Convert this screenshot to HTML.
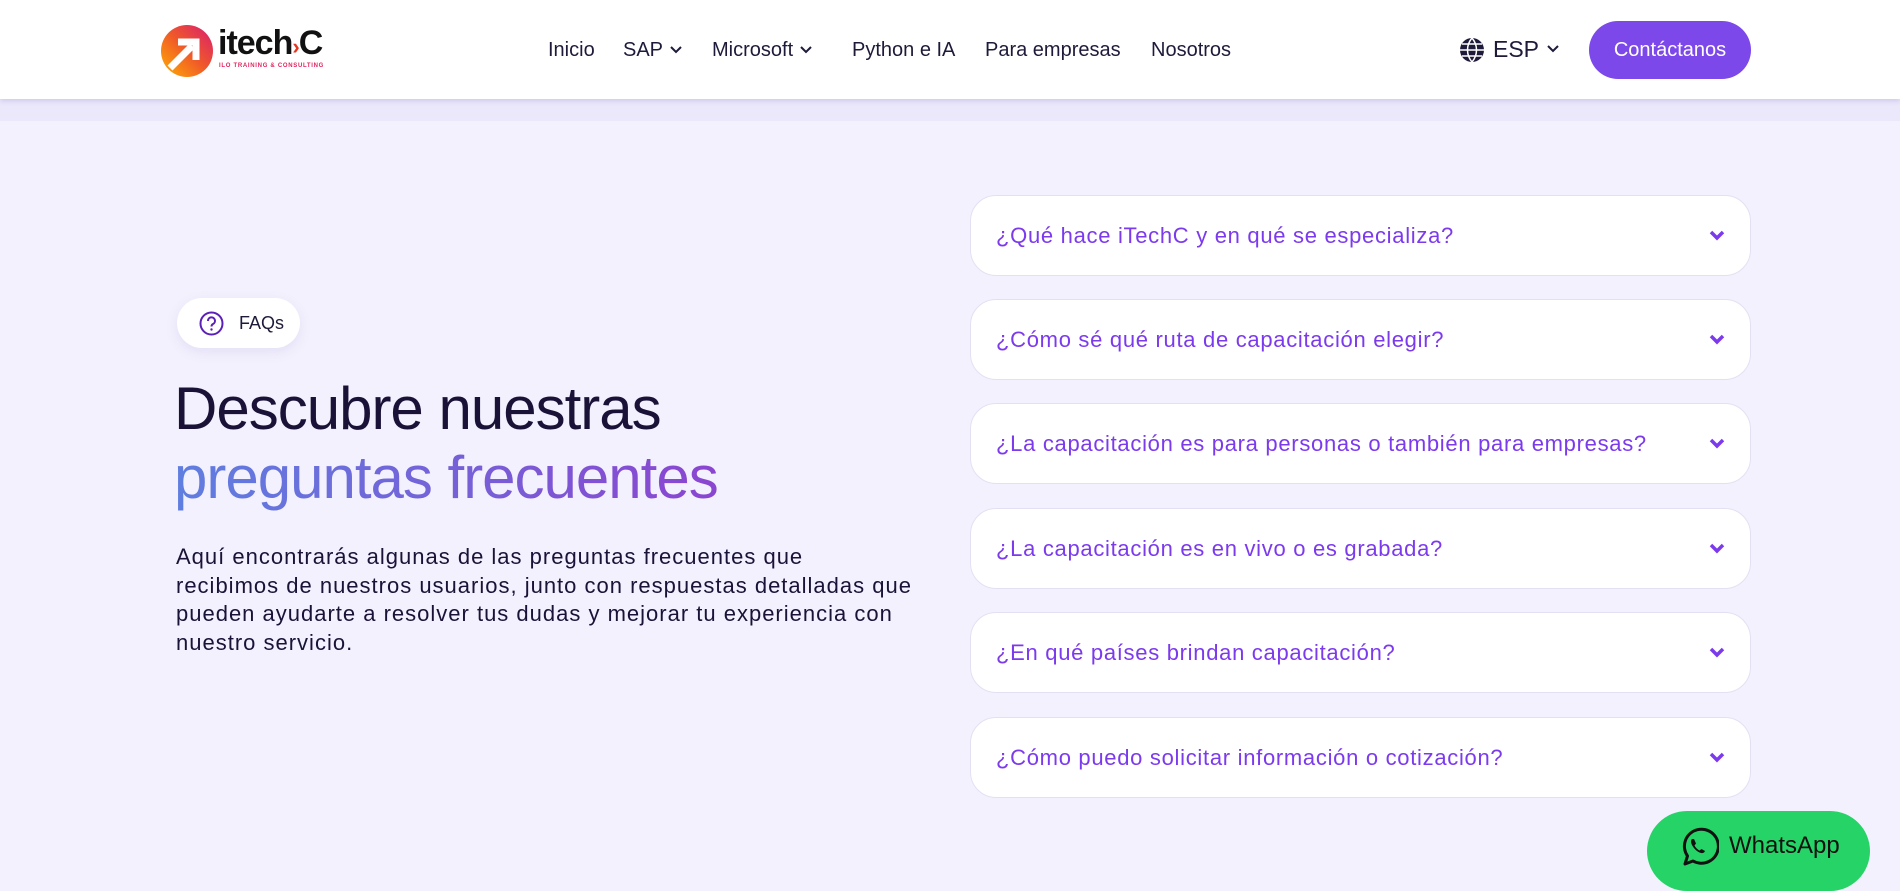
<!DOCTYPE html>
<html><head><meta charset="utf-8"><style>
*{margin:0;padding:0;box-sizing:border-box}
body{width:1900px;height:870px;overflow:hidden;background:#f3f1fd;font-family:"Liberation Sans",sans-serif;position:relative}
.hdr{position:absolute;left:0;top:0;width:1900px;height:99px;background:#fff;box-shadow:0 2px 5px rgba(80,60,160,.18);z-index:2}
.band{position:absolute;left:0;top:99px;width:1900px;height:22px;background:#ebe8fb}
.nav{position:absolute;top:39px;font-size:20px;color:#1e1b3a}
.nav span{position:absolute;white-space:nowrap}
.nav svg{margin-left:6px;vertical-align:2px}
.btn{position:absolute;left:1589px;top:21px;width:162px;height:58px;border-radius:29px;background:#7c48ea;color:#fff;font-size:20px;text-align:center;line-height:58px}
.faq{position:absolute;left:970px;width:781px;height:81px;background:#fff;border:1px solid #e4e0f3;border-radius:26px;color:#7c3aed;font-size:22px;line-height:79px;padding-left:25px;letter-spacing:.7px}
.faq svg{position:absolute;right:24px;top:32px}
.pill{position:absolute;left:177px;top:298px;width:123px;height:50px;border-radius:25px;background:#fff;box-shadow:0 4px 12px rgba(120,100,200,.12);font-size:18px;color:#1e1b3a;line-height:50px;padding-left:62px}
h1{position:absolute;left:174px;top:374px;font-weight:normal;font-size:60px;line-height:69px;letter-spacing:-1px;color:#1b1238;white-space:nowrap}
.grad{background:linear-gradient(90deg,#5f7ee0,#8b45d0);-webkit-background-clip:text;background-clip:text;color:transparent}
p{position:absolute;left:176px;top:543px;width:746px;font-size:22px;letter-spacing:1px;line-height:28.5px;color:#1b1238}
.wa{position:absolute;left:1647px;top:811px;width:223px;height:80px;border-radius:40px;background:#25d366;font-size:24px;color:#111;line-height:70px;padding-left:82px}
</style></head><body>
<div class="hdr">
 <svg style="position:absolute;left:160px;top:24px" width="54" height="54" viewBox="0 0 54 54"><defs><linearGradient id="g" x1="0" y1="1" x2="1" y2="0"><stop offset="0" stop-color="#ffb000"/><stop offset=".5" stop-color="#f05a28"/><stop offset="1" stop-color="#d81b72"/></linearGradient></defs><circle cx="27" cy="27" r="26" fill="url(#g)"/><path d="M10 44 L32 22 M18 18 H36 V36" stroke="#fff" stroke-width="7" fill="none"/></svg>
 <div style="position:absolute;left:218px;top:24px;font-size:34px;font-weight:bold;color:#111;letter-spacing:-1px">itech<span style="color:#e8341c;font-size:22px">›</span>C</div>
 <div style="position:absolute;left:219px;top:63px;font-size:6px;color:#e0245e;letter-spacing:.7px;font-weight:bold">ILO TRAINING &amp; CONSULTING</div>
 <div class="nav"><span style="left:548px">Inicio</span><span style="left:623px">SAP<svg width="14" height="9" viewBox="0 0 14 9"><path d="M2 2L7 7L12 2" stroke="#1e1b3a" stroke-width="2" fill="none"/></svg></span><span style="left:712px">Microsoft<svg width="14" height="9" viewBox="0 0 14 9"><path d="M2 2L7 7L12 2" stroke="#1e1b3a" stroke-width="2" fill="none"/></svg></span><span style="left:852px">Python e IA</span><span style="left:985px">Para empresas</span><span style="left:1151px">Nosotros</span></div>
 <svg style="position:absolute;left:1459px;top:37px" width="26" height="26" viewBox="0 0 26 26"><circle cx="13" cy="13" r="12" fill="#1e1b3a"/><path d="M1 13H25M13 1C7 8 7 18 13 25M13 1C19 8 19 18 13 25M3 7H23M3 19H23" stroke="#fff" stroke-width="1.5" fill="none"/></svg>
 <div style="position:absolute;left:1493px;top:36px;font-size:23px;color:#1e1b3a">ESP</div>
 <svg style="position:absolute;left:1546px;top:44px" width="14" height="10" viewBox="0 0 14 10"><path d="M2 2L7 7L12 2" stroke="#1e1b3a" stroke-width="2" fill="none"/></svg>
 <div class="btn">Contáctanos</div>
</div>
<div class="band"></div>
<div class="pill"><svg style="position:absolute;left:22px;top:13px" width="25" height="25" viewBox="0 0 25 25"><circle cx="12.5" cy="12.5" r="11" stroke="#5b21b6" stroke-width="2" fill="none"/><path d="M9 10a3.5 3.5 0 1 1 5 3c-1 .6-1.5 1.2-1.5 2.5" stroke="#5b21b6" stroke-width="2" fill="none"/><circle cx="12.5" cy="18.5" r="1.2" fill="#5b21b6"/></svg>FAQs</div>
<h1>Descubre nuestras<br><span class="grad">preguntas frecuentes</span></h1>
<p>Aquí encontrarás algunas de las preguntas frecuentes que<br>recibimos de nuestros usuarios, junto con respuestas detalladas que<br>pueden ayudarte a resolver tus dudas y mejorar tu experiencia con<br>nuestro servicio.</p>
<div class="faq" style="top:195px">¿Qué hace iTechC y en qué se especializa?<svg width="18" height="14" viewBox="0 0 18 14"><path d="M3 4L9 10L15 4" stroke="#7c3aed" stroke-width="3.5" fill="none"/></svg></div>
<div class="faq" style="top:299px">¿Cómo sé qué ruta de capacitación elegir?<svg width="18" height="14" viewBox="0 0 18 14"><path d="M3 4L9 10L15 4" stroke="#7c3aed" stroke-width="3.5" fill="none"/></svg></div>
<div class="faq" style="top:403px">¿La capacitación es para personas o también para empresas?<svg width="18" height="14" viewBox="0 0 18 14"><path d="M3 4L9 10L15 4" stroke="#7c3aed" stroke-width="3.5" fill="none"/></svg></div>
<div class="faq" style="top:508px">¿La capacitación es en vivo o es grabada?<svg width="18" height="14" viewBox="0 0 18 14"><path d="M3 4L9 10L15 4" stroke="#7c3aed" stroke-width="3.5" fill="none"/></svg></div>
<div class="faq" style="top:612px">¿En qué países brindan capacitación?<svg width="18" height="14" viewBox="0 0 18 14"><path d="M3 4L9 10L15 4" stroke="#7c3aed" stroke-width="3.5" fill="none"/></svg></div>
<div class="faq" style="top:717px">¿Cómo puedo solicitar información o cotización?<svg width="18" height="14" viewBox="0 0 18 14"><path d="M3 4L9 10L15 4" stroke="#7c3aed" stroke-width="3.5" fill="none"/></svg></div>
<div class="wa"><svg style="position:absolute;left:30px;top:15px" width="42" height="42" viewBox="0 0 42 42"><path d="M8 38L10.5 30A17 17 0 1 1 16 35Z" stroke="#111" stroke-width="3" fill="none" stroke-linejoin="round"/><path d="M15 13c-1 1-1.5 3 0 6s5 7 9 8c2 .5 3.5-.5 4-2l-3.5-2-2 1.5c-2-1-4-3-5-5l1.5-2-2-4.5c-1 0-1.5 0-2 0Z" fill="#111"/></svg>WhatsApp</div>
</body></html>
